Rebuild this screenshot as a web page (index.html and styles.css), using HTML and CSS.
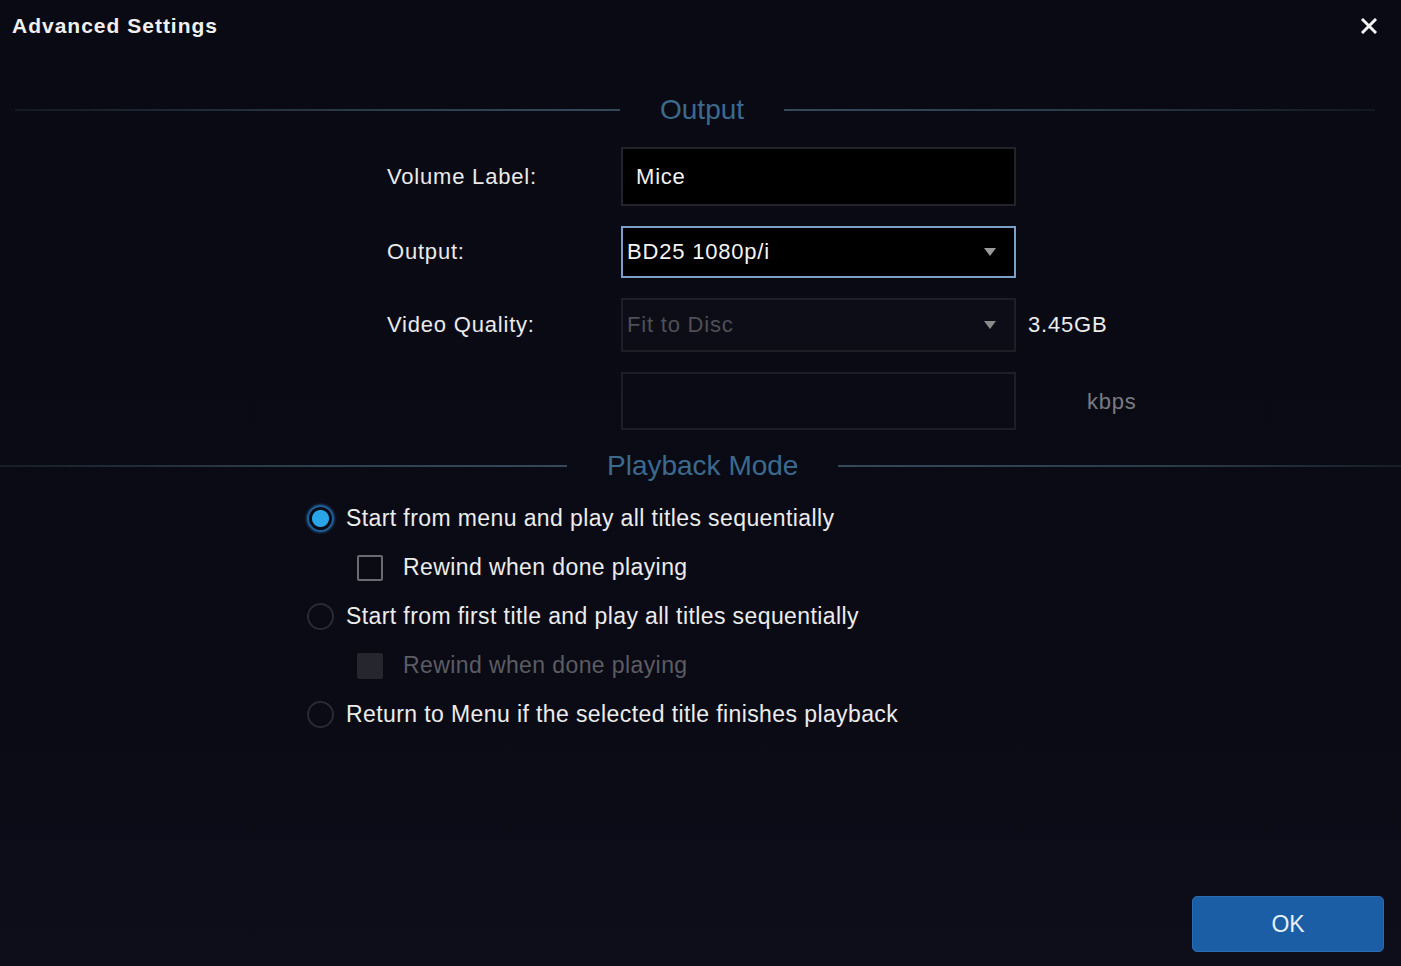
FILE: index.html
```html
<!DOCTYPE html>
<html lang="en">
<head>
    <meta charset="UTF-8">
    <title>Advanced Settings</title>
    <link rel="stylesheet" href="styles.css">
</head>
<body>
    <div class="dialog">
        <div class="titlebar">
            <h1>Advanced Settings</h1>
            <button class="close" aria-label="Close">
                <svg width="16" height="16" viewBox="0 0 16 16"><path d="M2 2 L14 14 M14 2 L2 14" stroke="#f2f2f2" stroke-width="3" stroke-linecap="square"/></svg>
            </button>
        </div>

        <div class="divider output-divider">
            <span class="line left"></span>
            <h2>Output</h2>
            <span class="line right"></span>
        </div>

        <div class="form">
            <label>Volume Label:</label>
            <div class="field text-field">Mice</div>
            <span></span>

            <label>Output:</label>
            <div class="field select active">
                <span>BD25 1080p/i</span>
                <span class="arrow"></span>
            </div>
            <span></span>

            <label>Video Quality:</label>
            <div class="field select disabled">
                <span>Fit to Disc</span>
                <span class="arrow"></span>
            </div>
            <span class="size">3.45GB</span>

            <span></span>
            <div class="field empty"></div>
            <span class="unit">kbps</span>
        </div>

        <div class="divider playback-divider">
            <span class="line left"></span>
            <h2>Playback Mode</h2>
            <span class="line right"></span>
        </div>

        <ul class="options">
            <li class="radio-row"><span class="radio checked"></span>Start from menu and play all titles sequentially</li>
            <li class="check-row"><span class="checkbox"></span>Rewind when done playing</li>
            <li class="radio-row"><span class="radio"></span>Start from first title and play all titles sequentially</li>
            <li class="check-row disabled"><span class="checkbox"></span>Rewind when done playing</li>
            <li class="radio-row"><span class="radio"></span>Return to Menu if the selected title finishes playback</li>
        </ul>

        <div class="footer">
            <button class="ok">OK</button>
        </div>
    </div>
</body>
</html>
```

FILE: styles.css
```css
body {
    margin: 0;
    background: #0b0b15;
    font-family: 'Liberation Sans', Arial, sans-serif;
    color: #ececec;
}
.dialog {
    height: 966px;
    display: flex;
    flex-direction: column;
    background: linear-gradient(to bottom, #0a0a14 0%, #0b0b16 75%, #0e0e1a 100%);
}
.titlebar {
    display: flex;
    justify-content: space-between;
    align-items: center;
    height: 52px;
    padding: 0 24px 0 12px;
}
.titlebar h1 {
    margin: 0;
    font-size: 21px;
    font-weight: bold;
    color: #f0f0f0;
    letter-spacing: 1px;
}
.close {
    border: none;
    background: none;
    padding: 0;
    cursor: pointer;
    display: flex;
}

/* section headings with rules */
.divider {
    display: flex;
    align-items: center;
    height: 36px;
}
.divider h2 {
    margin: 0;
    padding: 0 40px;
    font-size: 28px;
    font-weight: normal;
    color: #3b6a8e;
    white-space: nowrap;
}
.line {
    height: 2px;
}
.output-divider {
    margin-top: 40px;
    padding: 0 26px 0 15px;
}
.output-divider .left {
    width: 605px;
    background: linear-gradient(to right, #141a24, #2a3c4a 60%, #34495a);
}
.output-divider .right {
    flex: 1;
    background: linear-gradient(to right, #34495a, #2a3c4a 50%, #121820);
}
.playback-divider {
    margin-top: 18px;
}
.playback-divider .left {
    width: 567px;
    background: linear-gradient(to right, #161e28, #2c3e4c 50%, #34495a);
}
.playback-divider .right {
    flex: 1;
    background: linear-gradient(to right, #34495a, #2a3c4a 60%, #161e28);
}

/* form */
.form {
    display: grid;
    grid-template-columns: 234px 395px auto;
    grid-template-rows: 59px 52px 54px 58px;
    row-gap: 20px;
    align-items: center;
    margin: 19px 0 0 387px;
    font-size: 22px;
    letter-spacing: 0.8px;
}
.form label {
    color: #eaeaea;
}
.field {
    box-sizing: border-box;
    height: 100%;
    display: flex;
    align-items: center;
}
.text-field {
    background: #000;
    border: 2px solid #23232b;
    padding: 0 13px;
    color: #f2f2f2;
}
.select {
    justify-content: space-between;
    padding: 0 18px 0 4px;
}
.select.active {
    background: #000;
    border: 2px solid #7b9fc6;
    color: #f4f4f4;
}
.select.disabled {
    background: #0d0d17;
    border: 2px solid #1e1e27;
    color: #4f4f56;
}
.arrow {
    width: 0;
    height: 0;
    border-left: 6px solid transparent;
    border-right: 6px solid transparent;
    border-top: 8px solid #9a9a9a;
}
.disabled .arrow {
    border-top-color: #8a8a8a;
}
.empty {
    background: #0b0b15;
    border: 2px solid #1e1e27;
}
.size {
    margin-left: 12px;
    color: #ececec;
}
.unit {
    margin: 2px 0 0 71px;
    color: #7a7a80;
}

/* playback options */
.options {
    list-style: none;
    margin: 10px 0 0 307px;
    padding: 0;
    font-size: 23px;
    letter-spacing: 0.4px;
}
.options li {
    display: flex;
    align-items: center;
    height: 49px;
}
.radio {
    box-sizing: border-box;
    width: 27px;
    height: 27px;
    border-radius: 50%;
    border: 2px solid #2a2a32;
    margin-right: 12px;
}
.radio.checked {
    border: 2px solid #1e5f9a;
    background: radial-gradient(circle, #2aa4e8 0 8px, #0b0b15 9px);
    box-shadow: 0 0 3px #2d80c0;
}
.check-row {
    padding-left: 50px;
}
.checkbox {
    box-sizing: border-box;
    width: 26px;
    height: 26px;
    border: 2px solid #6a6a70;
    border-radius: 2px;
    margin-right: 20px;
}
.check-row.disabled {
    color: #5c5c62;
}
.check-row.disabled .checkbox {
    border-color: #26262e;
    background: #26262e;
}

.footer {
    margin-top: auto;
    display: flex;
    justify-content: flex-end;
    padding: 0 17px 14px 0;
}
.ok {
    width: 192px;
    height: 56px;
    background: #1b5ea6;
    border: 1px solid #2a6cb2;
    border-radius: 5px;
    color: #e8f0f8;
    font-family: 'Liberation Sans', Arial, sans-serif;
    font-size: 23px;
    cursor: pointer;
}
```
